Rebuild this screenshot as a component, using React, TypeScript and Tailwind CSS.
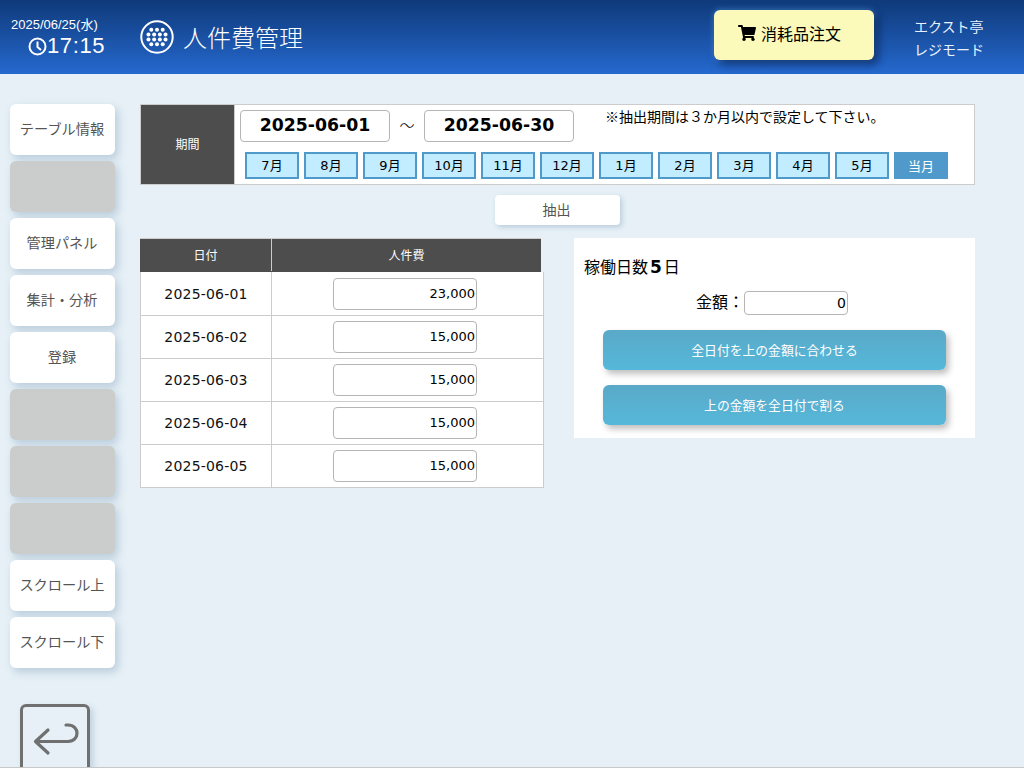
import { FaShoppingCart } from "react-icons/fa";

const months = ["7月","8月","9月","10月","11月","12月","1月","2月","3月","4月","5月"];
const rows: [string,string][] = [["2025-06-01","23,000"],["2025-06-02","15,000"],["2025-06-03","15,000"],["2025-06-04","15,000"],["2025-06-05","15,000"]];
const side: [string, boolean][] = [["テーブル情報",true],["",false],["管理パネル",true],["集計・分析",true],["登録",true],["",false],["",false],["",false],["スクロール上",true],["スクロール下",true]];

function GridIcon() {
  const dots: [number, number][] = [];
  [3, 4, 4, 3].forEach((n, i) => {
    for (let c = 0; c < n; c++) dots.push([17 + (c - (n - 1) / 2) * 5.7, 17 + (i - 1.5) * 4.8]);
  });
  return (
    <svg width="34" height="34" viewBox="0 0 34 34" className="shrink-0">
      <circle cx="17" cy="17" r="15.7" fill="none" stroke="#fff" strokeWidth="2" />
      {dots.map(([x, y], i) => <circle key={i} cx={x} cy={y} r="2" fill="#fff" />)}
    </svg>
  );
}

function Clock() {
  return (
    <svg width="19" height="19" viewBox="0 0 19 19" className="shrink-0">
      <circle cx="9.5" cy="9.5" r="8" fill="none" stroke="#fff" strokeWidth="2" />
      <path d="M9.5 4.5V10l3.5 3" fill="none" stroke="#fff" strokeWidth="2" />
    </svg>
  );
}

export default function App() {
  return (
    <div className="w-[1024px] h-[768px] overflow-hidden bg-[#e6f0f6] flex flex-col border-b border-[#c8c8c8] font-['DejaVu_Sans','Noto_Sans_CJK_JP',sans-serif] text-black">
      <header className="h-[74px] shrink-0 bg-gradient-to-b from-[#0f3a7a] to-[#2569cf] flex items-start text-white">
        <div className="w-[140px] shrink-0 pl-[11px] pt-[17px]">
          <div className="text-[13px] leading-[16px] font-['Liberation_Sans','Noto_Sans_CJK_JP',sans-serif] whitespace-nowrap">2025/06/25(水)</div>
          <div className="flex items-center mt-[1px] pl-[17px] text-[22px] leading-[24px] tracking-[0.6px] font-['Liberation_Sans',sans-serif]">
            <Clock /><span>17:15</span>
          </div>
        </div>
        <div className="flex items-center gap-[9px] pt-[20px]">
          <GridIcon />
          <span className="text-[24px] leading-[34px] font-['Noto_Sans_CJK_JP',sans-serif] font-light">人件費管理</span>
        </div>
        <button className="ml-[411px] mt-[10px] w-[160px] h-[50px] rounded-[6px] bg-[#fbfabb] text-black flex items-center justify-center gap-[5px] pr-[9px] pb-[4px] text-[16px] font-['Noto_Sans_CJK_JP',sans-serif] shadow-[4px_4px_8px_rgba(0,20,60,0.65),0_0_6px_rgba(100,180,255,0.6)]">
          <FaShoppingCart className="text-[18px]" />
          <span>消耗品注文</span>
        </button>
        <div className="ml-[40px] pt-[15px] text-[14px] leading-[23px] text-[#e8f2ff] font-['Noto_Sans_CJK_JP',sans-serif]">
          <div>エクスト亭</div>
          <div>レジモード</div>
        </div>
      </header>

      <div className="flex flex-1 min-h-0">
        <aside className="w-[140px] shrink-0 pl-[10px] pt-[30px] flex flex-col gap-[6px]">
          {side.map(([t, on], i) => (
            <button key={i} className={`w-[105px] h-[51px] shrink-0 rounded-[6px] pb-[2px] pr-[1px] text-[14.2px] text-[#555] font-['Noto_Sans_CJK_JP',sans-serif] shadow-[3px_4px_8px_rgba(120,150,180,0.4)] ${on ? "bg-white" : "bg-[#cbcdcc]"}`}>{t}</button>
          ))}
          <button className="ml-[10px] mt-[30px] w-[70px] h-[70px] shrink-0 rounded-[6px] border-[3px] border-[#707070] flex items-start justify-start shadow-[3px_3px_6px_rgba(120,150,180,0.35)]">
            <svg width="64" height="64" viewBox="0 0 64 64" fill="none" stroke="#707070" strokeWidth="3.2" strokeLinecap="round" strokeLinejoin="round">
              <path d="M25 23 L12.5 34.5 L25 46 M12.5 34.5 H45 C57 34.5 57 18 45 18 H43" />
            </svg>
          </button>
        </aside>

        <main className="w-[835px] pt-[30px] flex flex-col">
          <section className="h-[81px] flex border border-[#cccccc] bg-white shrink-0">
            <div className="w-[94px] shrink-0 bg-[#4d4d4d] text-white text-[12px] pb-[1px] flex items-center justify-center border-r border-[#cccccc] font-['Noto_Sans_CJK_JP',sans-serif]">期間</div>
            <div className="flex-1 pl-[5px] pt-[5px]">
              <div className="flex items-start h-[32px]">
                <div className="w-[150px] h-[32px] rounded-[4px] border border-[#b5b5b5] flex items-center justify-center text-[17.3px] font-bold">2025-06-01</div>
                <span className="w-[34px] text-center text-[15px] leading-[29px] font-light font-['Noto_Sans_CJK_JP',sans-serif]">～</span>
                <div className="w-[150px] h-[32px] rounded-[4px] border border-[#b5b5b5] flex items-center justify-center text-[17.3px] font-bold">2025-06-30</div>
                <span className="ml-[31px] text-[14px] leading-[14px] mt-[-1px] font-['Noto_Sans_CJK_JP',sans-serif] whitespace-nowrap">※抽出期間は３か月以内で設定して下さい。</span>
              </div>
              <div className="flex gap-[5px] pl-[5px] mt-[10px]">
                {months.map((m) => (
                  <div key={m} className="w-[54px] h-[27px] border-2 border-[#4f9acb] bg-[#c2ecff] text-[13px] flex items-center justify-center">{m}</div>
                ))}
                <div className="w-[54px] h-[27px] bg-[#4f9acb] text-white text-[13px] flex items-center justify-center font-['Noto_Sans_CJK_JP',sans-serif]">当月</div>
              </div>
            </div>
          </section>

          <div className="flex justify-center mt-[10px] shrink-0">
            <button className="ml-[-1px] w-[125px] h-[30px] rounded-[4px] bg-white pb-[1px] pr-[1px] text-[14px] text-[#555] font-['Noto_Sans_CJK_JP',sans-serif] shadow-[2px_2px_5px_rgba(120,150,180,0.4)]">抽出</button>
          </div>

          <div className="flex items-start mt-[13px]">
            <div className="w-[404px] shrink-0">
              <div className="w-[401px] h-[34px] flex bg-[#4d4d4d] text-white text-[12px] pb-[1px] border-t border-[#cccccc] font-['Noto_Sans_CJK_JP',sans-serif]">
                <div className="w-[131px] flex items-center justify-center">日付</div>
                <div className="flex-1 flex items-center justify-center border-l border-[#cccccc]">人件費</div>
              </div>
              <div className="bg-white border-x border-b border-[#cccccc]">
                {rows.map(([d, v], i) => (
                  <div key={d} className={`h-[43px] flex text-[14px] ${i > 0 ? "border-t border-[#cccccc]" : ""}`}>
                    <div className="w-[130px] flex items-center justify-center pt-[1px] text-[#111] tracking-[0.2px]">{d}</div>
                    <div className="flex-1 flex items-center justify-center border-l border-[#cccccc]">
                      <div className="ml-[-5px] w-[144px] h-[32px] rounded-[4px] border border-[#b5b5b5] flex items-center justify-end pr-[1px] text-[13px]">{v}</div>
                    </div>
                  </div>
                ))}
              </div>
            </div>

            <div className="ml-[30px] w-[401px] h-[200px] bg-white flex flex-col shrink-0">
              <div className="h-[39px] pl-[10px] pt-[17px] text-[16px] leading-[22px] font-['Noto_Sans_CJK_JP',sans-serif]">稼働日数<b className="font-['DejaVu_Sans',sans-serif] text-[17px] mx-[2px]">5</b>日</div>
              <div className="flex items-center pl-[122px] mt-[14px] h-[24px]">
                <span className="text-[16px] leading-[20px] w-[48px] shrink-0 mt-[-4px] font-['Noto_Sans_CJK_JP',sans-serif]">金額：</span>
                <div className="w-[104px] h-[24px] rounded-[4px] border border-[#b5b5b5] text-right pr-[1px] text-[14px] leading-[22px]">0</div>
              </div>
              <div className="mt-[15px] px-[29px] flex flex-col gap-[15px]">
                <button className="h-[40px] rounded-[6px] pb-[1px] bg-gradient-to-b from-[#5aa9c8] to-[#55b8da] text-white text-[12.8px] font-['Noto_Sans_CJK_JP',sans-serif] shadow-[3px_4px_6px_rgba(0,0,0,0.25)]">全日付を上の金額に合わせる</button>
                <button className="h-[40px] rounded-[6px] pb-[1px] bg-gradient-to-b from-[#5aa9c8] to-[#55b8da] text-white text-[12.8px] font-['Noto_Sans_CJK_JP',sans-serif] shadow-[3px_4px_6px_rgba(0,0,0,0.25)]">上の金額を全日付で割る</button>
              </div>
            </div>
          </div>
        </main>
      </div>
    </div>
  );
}
